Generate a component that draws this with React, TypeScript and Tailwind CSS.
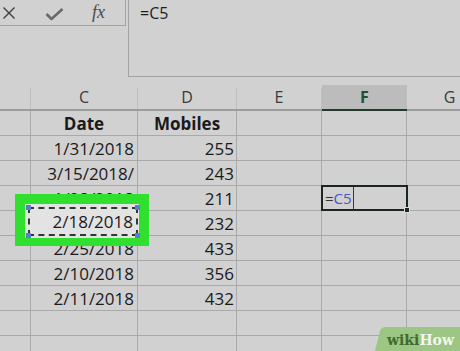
import React from "react";

const line = "border-[#a9a9a9]";

type RowProps = { c?: string; d?: string; bold?: boolean; f?: React.ReactNode };

function Row({ c, d, bold, f }: RowProps) {
  return (
    <div className="flex h-[25px] border-b border-[#a9a9a9] leading-[24px] text-[17px] text-[#1a1a1a]">
      <div className="w-[31px] shrink-0 border-r border-[#a9a9a9]" />
      <div
        className={
          bold
            ? "w-[107px] shrink-0 border-r border-[#a9a9a9] pt-[1px] text-center font-bold"
            : "w-[107px] shrink-0 border-r border-[#a9a9a9] pt-[1px] pr-[3px] text-right"
        }
      >
        {c}
      </div>
      <div
        className={
          bold
            ? "w-[99px] shrink-0 border-r border-[#a9a9a9] pt-[1px] text-center font-bold"
            : "w-[99px] shrink-0 border-r border-[#a9a9a9] pt-[1px] pr-[2px] text-right"
        }
      >
        {d}
      </div>
      <div className="w-[85px] shrink-0 border-r border-[#a9a9a9]" />
      <div className="relative w-[85px] shrink-0 border-r border-[#a9a9a9]">{f}</div>
      <div className="w-[85px] shrink-0" />
    </div>
  );
}

function Selected() {
  return (
    <div className="absolute -left-[1px] -top-[1px] z-10 h-[26px] w-[87px] border-2 border-[#1c2620]">
      <div className="absolute left-[2px] top-0 leading-[22px] text-[15px]">
        <span className="text-[#333]">=</span>
        <span className="text-[#4f52c4]">C5</span>
      </div>
      <div className="absolute left-[30px] top-0 bottom-0 w-[1px] bg-[#3a3a3a]" />
      <div className="absolute -right-[4px] -bottom-[4px] h-[6px] w-[6px] border border-[#dcdcdc] bg-[#1c2620]" />
    </div>
  );
}

export default function App() {
  return (
    <div className="relative h-[351px] w-[460px] overflow-hidden bg-[#d1d1d1] font-['Open_Sans','Noto_Sans',sans-serif] text-[#1a1a1a]">
      {/* top: toolbar + formula bar */}
      <div className="flex h-[86px]">
        <div className="relative h-[26px] w-[126px] shrink-0 border-r border-b border-[#a4a4a4]">
          <svg className="absolute left-0 top-0" width="126" height="25" viewBox="0 0 126 25">
            <path d="M3.5 7.5 L14.5 18.5 M14.5 7.5 L3.5 18.5" stroke="#3e3e3e" strokeWidth="1.4" fill="none" />
            <path d="M46.5 14 L51.5 19 L62.5 9" stroke="#6a6a6a" strokeWidth="2.6" fill="none" strokeLinejoin="round" />
          </svg>
          <span className="absolute left-[92px] top-[1px] font-['Liberation_Serif',serif] text-[18px] italic leading-[22px] text-[#4a4a4a]">
            fx
          </span>
        </div>
        <div className="ml-[2px] h-[77px] flex-1 border-l border-b border-[#a4a4a4] pl-[11px] pt-[1px] text-[16px] leading-[24px] text-[#1e1e1e]">
          =C5
        </div>
      </div>

      {/* column headers */}
      <div className="flex h-[25px] text-[16px] leading-[23px] text-[#3a3a3a]">
        <div className="w-[31px] shrink-0 border-b-2 border-[#9c9c9c]">
          <div className="ml-auto mt-[2px] h-[21px] w-[1px] bg-[#bdbdbd]" />
        </div>
        <div className="flex w-[107px] shrink-0 border-b-2 border-[#9c9c9c]">
          <div className="flex-1 text-center">C</div>
          <div className="mt-[2px] h-[21px] w-[1px] bg-[#bdbdbd]" />
        </div>
        <div className="flex w-[99px] shrink-0 border-b-2 border-[#9c9c9c]">
          <div className="flex-1 text-center">D</div>
          <div className="mt-[2px] h-[21px] w-[1px] bg-[#bdbdbd]" />
        </div>
        <div className="flex w-[85px] shrink-0 border-b-2 border-[#9c9c9c]">
          <div className="flex-1 text-center">E</div>
          <div className="mt-[2px] h-[21px] w-[1px] bg-[#bdbdbd]" />
        </div>
        <div className="-mt-[1px] flex h-[26px] w-[85px] shrink-0 border-b-2 border-[#24382b] bg-[#bcbcbc]">
          <div className="flex-1 pt-[1px] text-center font-bold text-[#1f5030]">F</div>
        </div>
        <div className="w-[85px] shrink-0 border-b-2 border-[#9c9c9c] text-center">G</div>
      </div>

      {/* data rows */}
      <Row c="Date" d="Mobiles" bold />
      <Row c="1/31/2018" d="255" />
      <Row c="3/15/2018/" d="243" />
      <Row c="1/28/2018" d="211" f={<Selected />} />
      <Row c="" d="232" />
      <Row c="2/25/2018" d="433" />
      <Row c="2/10/2018" d="356" />
      <Row c="2/11/2018" d="432" />
      <Row />
      <Row />

      {/* green highlight around C5 */}
      <div className="absolute left-[15px] top-[194px] h-[52px] w-[134px] border-[10px] border-b-[8px] border-[#2fe02f] bg-[#e3e3e3]">
        <div className="absolute left-[3px] top-[3px] right-[1px] bottom-[2px] border-2 border-dashed border-[#2b3a36]" />
        <div className="absolute left-[1px] top-[1px] h-[5px] w-[5px] bg-[#5a7dd4]" />
        <div className="absolute right-[-1px] top-[1px] h-[5px] w-[5px] bg-[#5a7dd4]" />
        <div className="absolute left-[1px] bottom-[0px] h-[5px] w-[5px] bg-[#5a7dd4]" />
        <div className="absolute right-[-1px] bottom-[0px] h-[5px] w-[5px] bg-[#5a7dd4]" />
        <div className="absolute right-[6px] top-[6px] text-[17px] leading-[24px] text-[#1a1a1a]">2/18/2018</div>
      </div>

      {/* wikiHow logo */}
      <div className="absolute bottom-0 right-0 h-[24px] w-[85px]">
        <svg className="absolute inset-0" width="85" height="24" viewBox="0 0 85 24">
          <path d="M0 24 L5 4 Q6.5 0 11 0 L85 0 L85 24 Z" fill="#9cc683" />
        </svg>
        <div className="absolute left-[12px] top-[4px] font-['DejaVu_Serif',serif] text-[14px] font-bold leading-[18px]">
          <span className="text-[#3f6b2c]">wiki</span>
          <span className="text-[#f3f5f0]">How</span>
        </div>
      </div>
    </div>
  );
}
